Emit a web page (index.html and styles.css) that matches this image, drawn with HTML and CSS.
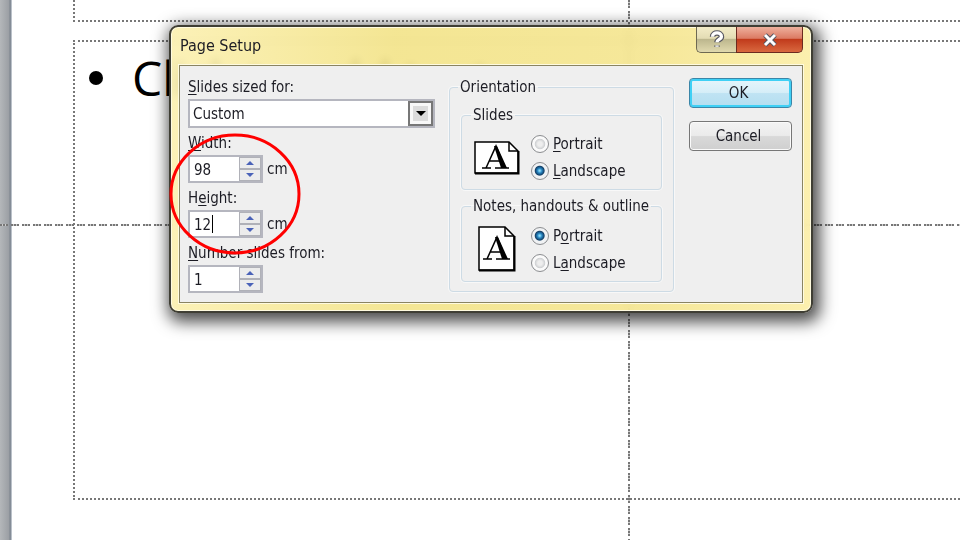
FILE: index.html
```html
<!DOCTYPE html>
<html lang="en">

<head>
    <meta charset="UTF-8">
    <title>Page Setup</title>
    <link rel="stylesheet" href="styles.css">
</head>

<body>
    <div class="gutter"></div>
    <main class="slide">
        <div class="placeholder title-box"></div>
        <div class="placeholder text-box">
            <ul class="bullets">
                <li>Click to add text</li>
            </ul>
        </div>
        <div class="spacer"></div>
    </main>
    <div class="guide-h"></div>
    <div class="guide-v"></div>

    <form class="dialog" role="dialog" aria-labelledby="dialog-title">
        <header class="titlebar">
            <h1 class="title" id="dialog-title">Page Setup</h1>
            <div class="caption-buttons">
                <button type="button" class="caption help" aria-label="Help">
                    <svg width="16" height="20" viewBox="0 0 14 18">
                        <path class="edge" d="M3 6C3 1.500 11 1.500 11 6C11 8.500 7 8.500 7 11M7 14V15" />
                        <path class="core" d="M3 6C3 1.500 11 1.500 11 6C11 8.500 7 8.500 7 11M7 14V15" />
                    </svg>
                </button>
                <button type="button" class="caption close" aria-label="Close">
                    <svg width="20" height="16" viewBox="0 0 20 16">
                        <path class="edge" d="M5 3L15 13M15 3L5 13" />
                        <path class="core" d="M5 3L15 13M15 3L5 13" />
                    </svg>
                </button>
            </div>
        </header>

        <div class="client">
            <div class="sizes">
                <div class="field">
                    <label for="size"><u>S</u>lides sized for:</label>
                    <div class="combo">
                        <select id="size">
                            <option>Custom</option>
                        </select>
                        <span class="combo-arrow"></span>
                    </div>
                </div>
                <div class="field">
                    <label for="width"><u>W</u>idth:</label>
                    <div class="row">
                        <div class="spinner">
                            <input type="text" id="width" value="98">
                            <div class="steps">
                                <button type="button" class="up" aria-label="Increase width"></button>
                                <button type="button" class="down" aria-label="Decrease width"></button>
                            </div>
                        </div>
                        <span>cm</span>
                    </div>
                </div>
                <div class="field">
                    <label for="height">H<u>e</u>ight:</label>
                    <div class="row">
                        <div class="spinner">
                            <input type="text" id="height" value="12">
                            <span class="caret"></span>
                            <div class="steps">
                                <button type="button" class="up" aria-label="Increase height"></button>
                                <button type="button" class="down" aria-label="Decrease height"></button>
                            </div>
                        </div>
                        <span>cm</span>
                    </div>
                </div>
                <div class="field">
                    <label for="number"><u>N</u>umber slides from:</label>
                    <div class="row">
                        <div class="spinner">
                            <input type="text" id="number" value="1">
                            <div class="steps">
                                <button type="button" class="up" aria-label="Increase number"></button>
                                <button type="button" class="down" aria-label="Decrease number"></button>
                            </div>
                        </div>
                    </div>
                </div>
            </div>

            <fieldset class="orientation">
                <legend>Orientation</legend>
                <fieldset class="group">
                    <legend>Slides</legend>
                    <div class="choice">
                        <svg class="page-icon" width="46" height="34" viewBox="0 0 46 34">
                            <path d="M1 1H35L44 10V32H1Z" fill="#fff" stroke="#000" stroke-width="1.500" />
                            <path d="M35 1V10H44" fill="none" stroke="#000" stroke-width="1.500" />
                            <path d="M1 32.500H44.500V10" fill="none" stroke="#000" stroke-width="2" />
                            <path d="M8 27H17M21 27H35M12 27L22 5L31 27M15 20H28" fill="none" stroke="#000" stroke-width="1.500" />
                            <path d="M20 5H23L33 27H27Z" />
                        </svg>
                        <div class="radios">
                            <label><input type="radio" name="slides"><span><u>P</u>ortrait</span></label>
                            <label><input type="radio" name="slides" checked><span><u>L</u>andscape</span></label>
                        </div>
                    </div>
                </fieldset>
                <fieldset class="group">
                    <legend>Notes, handouts &amp; outline</legend>
                    <div class="choice">
                        <svg class="page-icon" width="46" height="46" viewBox="0 0 46 46">
                            <path d="M5 1H31L40 10V44H5Z" fill="#fff" stroke="#000" stroke-width="1.500" />
                            <path d="M31 1V10H40" fill="none" stroke="#000" stroke-width="1.500" />
                            <path d="M5 44.500H40.500V10" fill="none" stroke="#000" stroke-width="2" />
                            <path d="M9 33H18M22 33H36M13 33L23 11L32 33M16 26H29" fill="none" stroke="#000" stroke-width="1.500" />
                            <path d="M21 11H24L34 33H28Z" />
                        </svg>
                        <div class="radios">
                            <label><input type="radio" name="notes" checked><span>P<u>o</u>rtrait</span></label>
                            <label><input type="radio" name="notes"><span>L<u>a</u>ndscape</span></label>
                        </div>
                    </div>
                </fieldset>
            </fieldset>

            <div class="actions">
                <button type="submit" class="btn ok">OK</button>
                <button type="button" class="btn">Cancel</button>
            </div>
        </div>

        <svg class="ring" width="134" height="124" viewBox="0 0 134 124">
            <ellipse cx="67" cy="62" rx="64" ry="59" />
        </svg>
    </form>
</body>

</html>
```
FILE: styles.css
```css
* {
    box-sizing: border-box;
}

body {
    display: flex;
    height: 100vh;
    margin: 0;
    overflow: hidden;
    background: white;
    color: #1c1c24;
    font: 15px/18px 'DejaVu Sans Condensed', 'Noto Sans', sans-serif;
}

/* Slide behind the dialog */
.gutter {
    width: 12px;
    background: linear-gradient(to right, #b4b7ba, #9b9fa4 75%, #747d88 85%, #d5dbe2);
}

.slide {
    flex: 1;
    display: flex;
    flex-direction: column;
    padding-left: 61px;
}

.placeholder {
    border: 2px dotted #777;
    border-right: none;
}

.title-box {
    height: 22px;
    margin-bottom: 18px;
    border-top: none;
}

.text-box {
    flex: 1;
}

.spacer {
    height: 40px;
}

.bullets {
    margin: 0;
    padding: 2px 0 0 14px;
    list-style: none;
    color: black;
    font: 48px/68px 'Open Sans', sans-serif;
}

.bullets li {
    display: flex;
    align-items: center;
    gap: 29px;
}

.bullets li::before {
    content: '';
    width: 14px;
    height: 14px;
    border-radius: 50%;
    background: black;
}

.guide-h {
    position: absolute;
    top: 224px;
    left: 0;
    right: 0;
    height: 2px;
    background: repeating-linear-gradient(to right, #777 0 2px, #ccc 2px 3px, #777 3px 5px, #ccc 5px 6px, #777 6px 8px, transparent 8px 11px);
}

.guide-v {
    position: absolute;
    top: 0;
    bottom: 0;
    left: 628px;
    width: 2px;
    background: repeating-linear-gradient(#777 0 2px, #ccc 2px 3px, #777 3px 5px, #ccc 5px 6px, #777 6px 8px, transparent 8px 11px);
}

/* Dialog window */
.dialog {
    position: absolute;
    top: 25px;
    left: 169px;
    padding: 0 8px 8px;
    border: 2px solid #3f3e34;
    border-radius: 9px;
    background: linear-gradient(to right, #fbefacdd, #f2e283dd 35%, #f4e48add 75%, #fbeda2dd);
    backdrop-filter: blur(4px);
    box-shadow: inset 0 0 0 1px #fffbe0, 3px 5px 16px 4px rgba(0, 0, 0, 0.7);
}

.titlebar {
    display: flex;
    justify-content: space-between;
    align-items: flex-start;
    height: 38px;
}

.title {
    margin: 0;
    padding: 10px 1px;
    font-size: 16px;
    font-weight: normal;
    line-height: 18px;
}

.caption-buttons {
    display: flex;
}

.caption {
    display: flex;
    align-items: center;
    justify-content: center;
    width: 40px;
    height: 26px;
    padding: 0;
    border: 1px solid #6e6952;
    border-top: none;
}

.help {
    border-right: none;
    border-radius: 0 0 0 5px;
    background: linear-gradient(#f3ecc8, #e3dcb4 45%, #bdb78e 50%, #e0d9ae);
}

.close {
    width: 67px;
    border-color: #6b2a20;
    border-radius: 0 0 5px 0;
    background: linear-gradient(#eeb09d, #dc7b64 45%, #c13b1c 50%, #d9683f);
}

.caption path {
    fill: none;
}

.edge {
    stroke: #555560;
    stroke-width: 5;
}

.core {
    stroke: white;
    stroke-width: 3;
}

.client {
    display: flex;
    align-items: flex-start;
    padding: 12px 10px 9px 8px;
    border: 1px solid #8a8462;
    background: #efefef;
    box-shadow: 0 0 0 1px #fffbe0;
}

.sizes {
    display: flex;
    flex-direction: column;
    gap: 6px;
    width: 247px;
    margin-right: 14px;
}

.field {
    display: flex;
    flex-direction: column;
    gap: 3px;
}

u {
    text-underline-offset: 2px;
}

.combo {
    display: grid;
    align-items: center;
    height: 29px;
    border: 2px solid #b5b6bf;
    background: white;
}

.combo select {
    grid-area: 1 / 1;
    height: 25px;
    padding: 0 3px;
    border: none;
    background: none;
    appearance: none;
    color: inherit;
    font: inherit;
}

.combo-arrow {
    grid-area: 1 / 1;
    justify-self: end;
    display: grid;
    place-items: center;
    width: 25px;
    height: 25px;
    border: 2px solid #777;
    background: #dcdcdc;
    box-shadow: inset 0 0 0 3px #f8f8f8;
    pointer-events: none;
}

.combo-arrow::before {
    content: '';
    border: 5px solid transparent;
    border-top-color: black;
    border-bottom: none;
}

.row {
    display: flex;
    align-items: center;
    gap: 4px;
}

.spinner {
    position: relative;
    display: flex;
    width: 75px;
    height: 28px;
    border: 2px solid #b5b6bf;
    background: white;
}

.spinner input {
    flex: 1;
    min-width: 0;
    padding: 2px 4px 0;
    border: none;
    background: none;
    color: inherit;
    font: inherit;
}

.caret {
    position: absolute;
    top: 3px;
    left: 22px;
    width: 1px;
    height: 18px;
    background: black;
}

.steps {
    display: flex;
    flex-direction: column;
    width: 22px;
}

.steps button {
    display: grid;
    place-items: center;
    flex: 1;
    padding: 0;
    border: 1px solid #b0b1b8;
    background: #ececec;
}

.steps button::before {
    content: '';
    border: 4px solid transparent;
}

.steps .up::before {
    border-top: none;
    border-bottom-color: #4a62b8;
}

.steps .down::before {
    border-bottom: none;
    border-top-color: #4a62b8;
}

fieldset {
    min-width: 0;
    margin: 0;
    border: 1px solid #cddbe5;
    border-radius: 4px;
    box-shadow: 0 0 0 1px #f8f8f8;
}

legend {
    padding: 0 2px;
    white-space: nowrap;
}

.orientation {
    width: 225px;
    margin-right: 15px;
    padding: 10px 11px 9px;
}

.orientation > legend {
    margin-left: -3px;
}

.group {
    padding: 11px 12px 9px;
}

.group > legend {
    margin-left: -3px;
}

.group + .group {
    margin-top: 7px;
}

.choice {
    display: flex;
    align-items: center;
    gap: 11px;
}

.page-icon {
    flex: none;
}

.radios {
    display: flex;
    flex-direction: column;
    gap: 9px;
}

.radios label {
    display: flex;
    align-items: center;
    gap: 4px;
}

.radios input {
    width: 18px;
    height: 18px;
    margin: 0;
    border: 1px solid #8b8d90;
    border-radius: 50%;
    background: radial-gradient(circle, #eeeeee 20%, #d0d2d4 42%, #fafafa 50%);
    appearance: none;
}

.radios input:checked {
    background: radial-gradient(circle at 48% 48%, #8adcf8 4%, #2583c0 20%, #123f66 38%, #f0f2f4 46%);
}

.actions {
    display: flex;
    flex-direction: column;
    gap: 13px;
}

.btn {
    width: 103px;
    height: 30px;
    padding: 0 4px 0 0;
    border: 1px solid #777;
    border-radius: 4px;
    background: linear-gradient(#f3f3f3, #ebebeb 48%, #d9d9d9 52%, #cfcfcf);
    box-shadow: inset 0 0 0 1px #fafafa;
    color: inherit;
    font: inherit;
}

.ok {
    border-color: #3b86a8;
    background: linear-gradient(#e6f5fb, #d6eef8 48%, #bfe3f3 52%, #b4def0);
    box-shadow: inset 0 0 0 2px #3fd0f5;
}

/* Highlight around the width and height fields */
.ring {
    position: absolute;
    top: 105px;
    left: -3px;
    pointer-events: none;
}

.ring ellipse {
    fill: none;
    stroke: #f00;
    stroke-width: 3;
}
```
